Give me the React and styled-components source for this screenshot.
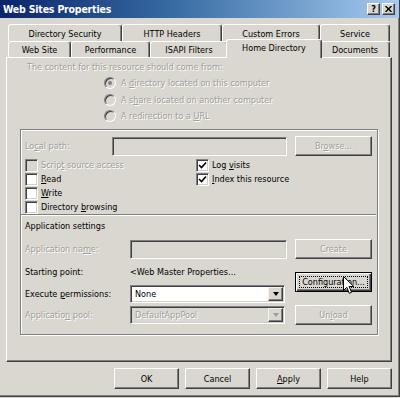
import React from 'react';
import styled, { createGlobalStyle, css } from 'styled-components';

const FACE = '#dad7d1';
const SHADOW = '#808080';
const DARK = '#404040';
const GRAYTEXT = '#a09e99';

const GlobalStyle = createGlobalStyle`
  html, body {
    margin: 0;
    padding: 0;
    background: ${FACE};
  }
  body {
    font-family: "DejaVu Sans Condensed", "Liberation Sans", sans-serif;
    font-size: 9px;
    color: #000;
  }
  * {
    box-sizing: border-box;
  }
`;

const disabledText = css`
  color: ${GRAYTEXT};
  text-shadow: 1px 1px 0 #fff;
`;

const Window = styled.div`
  width: 400px;
  height: 397px;
  display: flex;
  flex-direction: column;
  background: ${FACE};
  border-right: 1px solid ${DARK};
  border-bottom: 1px solid ${DARK};
  box-shadow: inset -1px -1px 0 ${SHADOW};
`;

const TitleBar = styled.div`
  height: 18px;
  flex-shrink: 0;
  display: flex;
  align-items: center;
  justify-content: space-between;
  padding: 0 4px 0 3px;
  background: linear-gradient(to right, #0a246a 0%, #3a6ea5 45%, #a6caf0 100%);
  color: #fff;
  font-weight: bold;
  font-size: 10.5px;
  letter-spacing: -0.2px;
`;

const CaptionButtons = styled.div`
  display: flex;
  gap: 2px;
`;

const CaptionButton = styled.div`
  width: 13px;
  height: 12px;
  display: flex;
  align-items: center;
  justify-content: center;
  background: ${FACE};
  border: 1px solid;
  border-color: #fff ${DARK} ${DARK} #fff;
  box-shadow: inset -1px -1px 0 ${SHADOW};
  color: #000;
  font-size: 9px;
  font-weight: bold;
  line-height: 1;
`;

const TabStrip = styled.div`
  margin-top: 6px;
  padding-left: 8px;
  display: flex;
  flex-direction: column;
`;

const TabRow = styled.div`
  display: flex;
  height: ${p => p.$h}px;
`;

const Tab = styled.div`
  width: ${p => p.$w}px;
  height: 100%;
  display: flex;
  align-items: center;
  justify-content: center;
  padding-top: 1px;
  background: ${FACE};
  border-top: 1px solid #fff;
  border-left: 1px solid #fff;
  border-right: 1px solid ${DARK};
  box-shadow: inset -1px 0 0 ${SHADOW};
  border-radius: 3px 3px 0 0;
  white-space: nowrap;
  ${p => p.$active && css`
    position: relative;
    z-index: 2;
    width: ${p.$w + 4}px;
    margin: -2px -2px 0 -2px;
    height: calc(100% + 3px);
    padding-top: 0;
    padding-bottom: 2px;
  `}
`;

const Panel = styled.div`
  margin-left: 6px;
  width: 386px;
  height: 305px;
  flex-shrink: 0;
  display: flex;
  flex-direction: column;
  padding-top: 3px;
  border-top: 1px solid #fff;
  border-left: 1px solid #fff;
  border-right: 1px solid ${DARK};
  border-bottom: 1px solid ${DARK};
  box-shadow: inset -1px -1px 0 ${SHADOW};
`;

const Intro = styled.div`
  margin-left: 20px;
  height: 13px;
  line-height: 13px;
  ${disabledText};
`;

const RadioList = styled.div`
  margin: 1px 0 0 97px;
  display: flex;
  flex-direction: column;
`;

const RadioRow = styled.div`
  height: 16.5px;
  display: flex;
  align-items: center;
  gap: 5px;
  ${disabledText};
`;

const RadioCircle = styled.span`
  width: 12px;
  height: 12px;
  border-radius: 50%;
  flex-shrink: 0;
  display: flex;
  align-items: center;
  justify-content: center;
  background: ${FACE};
  border: 1px solid;
  border-color: ${SHADOW} #fff #fff ${SHADOW};
  box-shadow: inset 1px 1px 0 ${DARK};
  text-shadow: none;

  &::after {
    content: '';
    display: ${p => (p.$checked ? 'block' : 'none')};
    width: 4px;
    height: 4px;
    border-radius: 50%;
    background: ${SHADOW};
  }
`;

const Key = styled.span`
  text-decoration: underline;
`;

const GroupBox = styled.div`
  margin: 4.5px 0 0 13px;
  width: 358px;
  height: 206px;
  display: flex;
  flex-direction: column;
  padding: 6px 0 0 4px;
  border: 1px solid ${SHADOW};
  box-shadow: inset 1px 1px 0 #fff, 1px 1px 0 #fff;
`;

const FieldRow = styled.div`
  display: flex;
  align-items: center;
  height: 20px;
`;

const Label = styled.div`
  width: ${p => p.$w}px;
  flex-shrink: 0;
  white-space: nowrap;
  ${p => p.$disabled && disabledText};
`;

const Sunken = styled.div`
  width: ${p => p.$w}px;
  height: ${p => p.$h}px;
  flex-shrink: 0;
  display: flex;
  align-items: center;
  padding-left: 3px;
  background: ${p => (p.$white ? '#fff' : FACE)};
  border: 1px solid;
  border-color: ${SHADOW} #fff #fff ${SHADOW};
  box-shadow: inset 1px 1px 0 ${DARK}, inset -1px -1px 0 #d4d0c8;
  white-space: nowrap;
  ${p => p.$disabled && disabledText};
`;

const SelectText = styled.div`
  flex: 1;
  padding-left: 1px;
`;

const DropArrow = styled.div`
  width: 15px;
  height: 14px;
  margin-right: 1px;
  display: flex;
  align-items: center;
  justify-content: center;
  background: ${FACE};
  border: 1px solid;
  border-color: #f4f3f0 ${DARK} ${DARK} #f4f3f0;
  box-shadow: inset -1px -1px 0 ${SHADOW};

  &::after {
    content: '';
    border-left: 3.5px solid transparent;
    border-right: 3.5px solid transparent;
    border-top: 4px solid ${p => (p.$disabled ? GRAYTEXT : '#000')};
  }
`;

const Button = styled.button`
  position: relative;
  width: ${p => p.$w}px;
  height: ${p => p.$h}px;
  flex-shrink: 0;
  padding: 0;
  display: flex;
  align-items: center;
  justify-content: center;
  font: inherit;
  color: #000;
  background: ${FACE};
  border: 1px solid;
  border-color: #fff ${DARK} ${DARK} #fff;
  box-shadow: inset -1px -1px 0 ${SHADOW};
  ${p => p.$disabled && disabledText};
  ${p => p.$default && css`
    border: 1px solid #000;
    box-shadow: inset 1px 1px 0 #fff, inset -1px -1px 0 ${DARK}, inset -2px -2px 0 ${SHADOW};
  `}
`;

const FocusRect = styled.span`
  position: absolute;
  inset: 3px;
  border: 1px dotted #000;
  display: flex;
  align-items: center;
  justify-content: center;
`;

const Cursor = styled.svg`
  position: absolute;
  left: 47px;
  top: 3px;
  z-index: 3;
`;

const CheckGrid = styled.div`
  margin-top: 2px;
  display: grid;
  grid-template-columns: 171px auto;
  grid-template-rows: repeat(4, 14px);
  grid-auto-flow: column;
`;

const CheckItem = styled.div`
  display: flex;
  align-items: center;
  gap: 3px;
  white-space: nowrap;
  ${p => p.$disabled && disabledText};
`;

const CheckBox = styled.span`
  width: 13px;
  height: 13px;
  flex-shrink: 0;
  display: flex;
  align-items: center;
  justify-content: center;
  background: ${p => (p.$disabled ? FACE : '#fff')};
  border: 1px solid;
  border-color: ${SHADOW} #fff #fff ${SHADOW};
  box-shadow: inset 1px 1px 0 ${DARK}, inset -1px -1px 0 #d4d0c8;
  text-shadow: none;
`;

const Separator = styled.div`
  margin: 0 1px 0 -4px;
  height: 2px;
  border-top: 1px solid ${SHADOW};
  border-bottom: 1px solid #fff;
`;

const Heading = styled.div`
  height: 20px;
  line-height: 20px;
  margin-bottom: 3px;
`;

const AppSection = styled.div`
  display: flex;
`;

const AppGrid = styled.div`
  display: grid;
  grid-template-columns: 105px 157px;
  grid-template-rows: 20px 25px 20px 21px;
  align-items: center;
`;

const ButtonColumn = styled.div`
  margin-left: 8px;
  display: flex;
  flex-direction: column;
  gap: 13px;
`;

const ButtonBar = styled.div`
  margin-top: 6px;
  padding-right: 7px;
  display: flex;
  justify-content: flex-end;
  gap: 6px;
`;

const Check = () => (
  <svg width="9" height="9" viewBox="0 0 9 9">
    <path d="M1 4 L3.5 6.5 L8 1.5" fill="none" stroke="#000" strokeWidth="1.6" />
  </svg>
);

const Select = ({ value, disabled }) => (
  <Sunken $w={155} $h={18} $white={!disabled} $disabled={disabled}>
    <SelectText>{value}</SelectText>
    <DropArrow $disabled={disabled} />
  </Sunken>
);

const Checkbox = ({ children, checked, disabled }) => (
  <CheckItem $disabled={disabled}>
    <CheckBox $disabled={disabled}>{checked && <Check />}</CheckBox>
    <span>{children}</span>
  </CheckItem>
);

export default function App() {
  return (
    <>
      <GlobalStyle />
      <Window>
        <TitleBar>
          <span>Web Sites Properties</span>
          <CaptionButtons>
            <CaptionButton>?</CaptionButton>
            <CaptionButton>
              <svg width="7" height="6" viewBox="0 0 7 6">
                <path d="M0.5 0 L6.5 6 M6.5 0 L0.5 6" stroke="#000" strokeWidth="1.4" />
              </svg>
            </CaptionButton>
          </CaptionButtons>
        </TitleBar>

        <TabStrip>
          <TabRow $h={17}>
            <Tab $w={114}>Directory Security</Tab>
            <Tab $w={100}>HTTP Headers</Tab>
            <Tab $w={98}>Custom Errors</Tab>
            <Tab $w={70}>Service</Tab>
          </TabRow>
          <TabRow $h={16}>
            <Tab $w={63}>Web Site</Tab>
            <Tab $w={79}>Performance</Tab>
            <Tab $w={78}>ISAPI Filters</Tab>
            <Tab $w={92} $active>Home Directory</Tab>
            <Tab $w={70}>Documents</Tab>
          </TabRow>
        </TabStrip>

        <Panel>
          <Intro>The content for this resource should come from:</Intro>
          <RadioList>
            <RadioRow>
              <RadioCircle $checked />
              <span>A <Key>d</Key>irectory located on this computer</span>
            </RadioRow>
            <RadioRow>
              <RadioCircle />
              <span>A s<Key>h</Key>are located on another computer</span>
            </RadioRow>
            <RadioRow>
              <RadioCircle />
              <span>A redirection to a <Key>U</Key>RL</span>
            </RadioRow>
          </RadioList>

          <GroupBox>
            <FieldRow>
              <Label $w={87} $disabled>Lo<Key>c</Key>al path:</Label>
              <Sunken $w={175} $h={19} />
              <Button $w={77} $h={20} $disabled style={{ marginLeft: 8 }}>
                <span>Br<Key>o</Key>wse...</span>
              </Button>
            </FieldRow>

            <CheckGrid>
              <Checkbox disabled>Scrip<Key>t</Key> source access</Checkbox>
              <Checkbox><Key>R</Key>ead</Checkbox>
              <Checkbox><Key>W</Key>rite</Checkbox>
              <Checkbox>Directory <Key>b</Key>rowsing</Checkbox>
              <Checkbox checked>Log <Key>v</Key>isits</Checkbox>
              <Checkbox checked><Key>I</Key>ndex this resource</Checkbox>
            </CheckGrid>

            <Separator />
            <Heading>Application settings</Heading>

            <AppSection>
              <AppGrid>
                <Label $disabled>Application na<Key>m</Key>e:</Label>
                <Sunken $w={157} $h={19} />
                <Label>Starting point:</Label>
                <Label>&lt;Web Master Properties...</Label>
                <Label>Execute <Key>p</Key>ermissions:</Label>
                <Select value="None" />
                <Label $disabled>Applicatio<Key>n</Key> pool:</Label>
                <Select value="DefaultAppPool" disabled />
              </AppGrid>
              <ButtonColumn>
                <Button $w={77} $h={20} $disabled>Create</Button>
                <Button $w={77} $h={20} $default>
                  <FocusRect>Configuration...</FocusRect>
                  <Cursor width="12" height="19" viewBox="0 0 12 19">
                    <path
                      d="M0.5 0.5 L0.5 14.5 L3.8 11.3 L6.3 17.3 L8.6 16.3 L6.1 10.5 L10.8 10.5 Z"
                      fill="#fff"
                      stroke="#000"
                      strokeWidth="1"
                      strokeLinejoin="miter"
                    />
                  </Cursor>
                </Button>
                <Button $w={77} $h={20} $disabled>Un<Key>l</Key>oad</Button>
              </ButtonColumn>
            </AppSection>
          </GroupBox>
        </Panel>

        <ButtonBar>
          <Button $w={65} $h={21}>OK</Button>
          <Button $w={65} $h={21}>Cancel</Button>
          <Button $w={65} $h={21}><span><Key>A</Key>pply</span></Button>
          <Button $w={65} $h={21}>Help</Button>
        </ButtonBar>
      </Window>
    </>
  );
}
